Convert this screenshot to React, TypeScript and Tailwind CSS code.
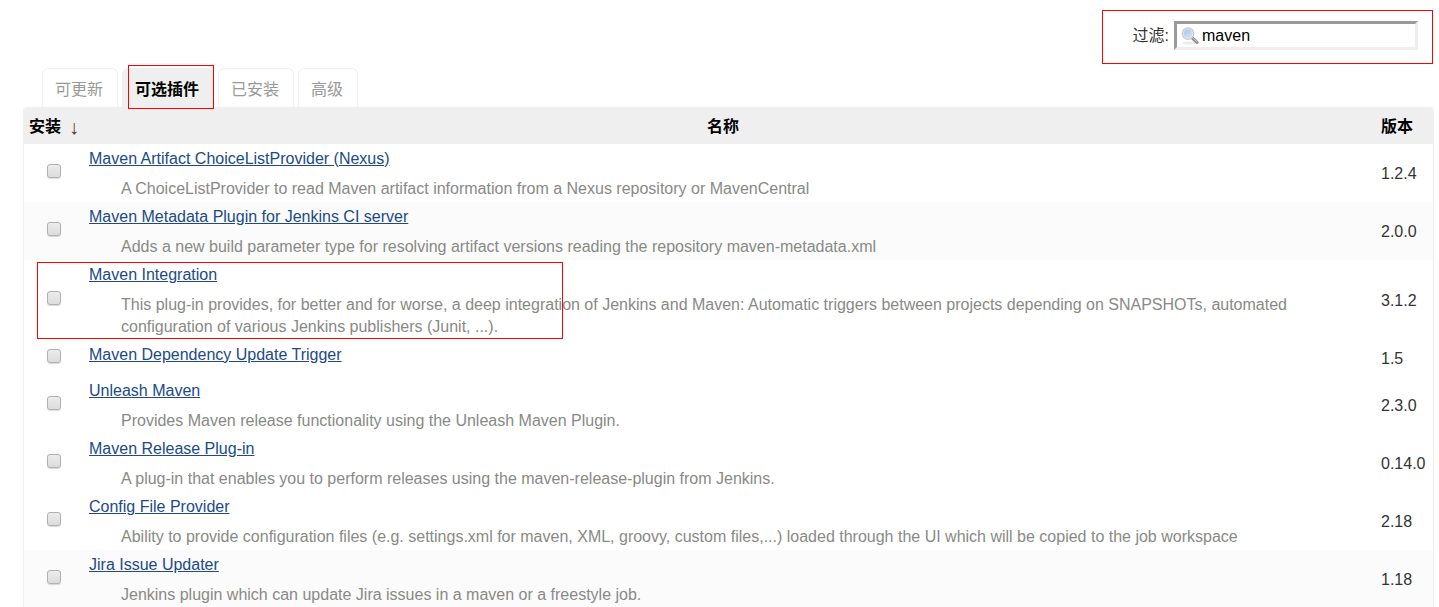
type Plugin = {
  name: string;
  version: string;
  description?: string;
  shaded?: boolean;
  highlighted?: boolean;
};

const plugins: Plugin[] = [
  {
    name: "Maven Artifact ChoiceListProvider (Nexus)",
    version: "1.2.4",
    description: "A ChoiceListProvider to read Maven artifact information from a Nexus repository or MavenCentral",
  },
  {
    name: "Maven Metadata Plugin for Jenkins CI server",
    version: "2.0.0",
    description: "Adds a new build parameter type for resolving artifact versions reading the repository maven-metadata.xml",
    shaded: true,
  },
  {
    name: "Maven Integration",
    version: "3.1.2",
    description:
      "This plug-in provides, for better and for worse, a deep integration of Jenkins and Maven: Automatic triggers between projects depending on SNAPSHOTs, automated configuration of various Jenkins publishers (Junit, ...).",
    highlighted: true,
  },
  { name: "Maven Dependency Update Trigger", version: "1.5" },
  {
    name: "Unleash Maven",
    version: "2.3.0",
    description: "Provides Maven release functionality using the Unleash Maven Plugin.",
  },
  {
    name: "Maven Release Plug-in",
    version: "0.14.0",
    description: "A plug-in that enables you to perform releases using the maven-release-plugin from Jenkins.",
  },
  {
    name: "Config File Provider",
    version: "2.18",
    description:
      "Ability to provide configuration files (e.g. settings.xml for maven, XML, groovy, custom files,...) loaded through the UI which will be copied to the job workspace",
  },
  {
    name: "Jira Issue Updater",
    version: "1.18",
    description: "Jenkins plugin which can update Jira issues in a maven or a freestyle job.",
    shaded: true,
  },
];

const tabs = [
  { label: "可更新" },
  { label: "可选插件", active: true },
  { label: "已安装" },
  { label: "高级" },
];

function SearchIcon() {
  return (
    <svg viewBox="0 0 18 18" className="h-[18px] w-[18px] shrink-0" aria-hidden="true">
      <defs>
        <linearGradient id="lens" x1="0" y1="0" x2="0.6" y2="1">
          <stop offset="0" stopColor="#a3c0e2" />
          <stop offset="1" stopColor="#d3e3f5" />
        </linearGradient>
      </defs>
      <ellipse cx="8" cy="16" rx="7" ry="1.6" fill="#ececec" />
      <path d="M11.4 11 16 15.4" stroke="#929292" strokeWidth="3.2" strokeLinecap="round" />
      <path d="M12 11.2 15.8 14.6" stroke="#c4c4c4" strokeWidth="1" strokeLinecap="round" />
      <circle cx="7" cy="6.6" r="5.7" fill="url(#lens)" stroke="#c6cbd2" strokeWidth="1.3" />
      <circle cx="7" cy="6.6" r="4.7" fill="none" stroke="#e9f1fa" strokeWidth="0.7" />
    </svg>
  );
}

function FilterBox() {
  return (
    <div className="flex justify-end pt-[10px] pr-[6px]">
      <div className="flex h-[54px] items-start border border-[#f00] pt-[10px] pr-[14px] pl-[30px]">
        <label htmlFor="filter-box" className="mr-[5px] leading-[29px]">
          过滤:
        </label>
        <div className="flex h-[29px] w-[244px] items-center gap-[3px] border-[3px] border-t-[#9a9a9a] border-r-[#eee] border-b-[#eee] border-l-[#9a9a9a] bg-white pl-1">
          <SearchIcon />
          <input
            id="filter-box"
            type="text"
            defaultValue="maven"
            className="h-full w-full min-w-0 bg-transparent text-black outline-none"
          />
        </div>
      </div>
    </div>
  );
}

function TabBar() {
  return (
    <nav className="mt-1 flex gap-1 pl-[42px]">
      {tabs.map((tab) => (
        <a
          key={tab.label}
          href="#"
          className={
            tab.active
              ? "relative h-[39px] rounded-t-md border border-b-0 border-[#efefef] bg-[#efefef] pr-[14px] pl-3 leading-[42px] font-bold text-black"
              : "h-[39px] rounded-t-md border border-b-0 border-[#efefef] pr-[14px] pl-3 leading-[42px] text-[#999]"
          }
        >
          {tab.label}
          {tab.active && <span className="absolute -top-1 -right-px -bottom-[2px] left-[5px] border border-[#f00]" />}
        </a>
      ))}
    </nav>
  );
}

function PluginRow({ plugin, index }: { plugin: Plugin; index: number }) {
  const id = `plugin-${index}`;
  return (
    <tr className={plugin.shaded ? "bg-[#fbfbfb]" : "bg-white"}>
      <td className="relative p-0 pr-[2px] pb-1 align-middle">
        <input
          id={id}
          type="checkbox"
          aria-label={plugin.name}
          className="mx-auto block h-[14px] w-[14px] appearance-none rounded-[3px] border border-[#b0b0b0] bg-linear-to-b from-[#ececec] to-[#dcdcdc] shadow-[0_1px_1px_rgba(0,0,0,0.15)] checked:bg-[#8fb0dc]"
        />
        {plugin.highlighted && (
          <span className="pointer-events-none absolute top-[2px] bottom-px left-[13px] w-[526px] border border-[#f00]" />
        )}
      </td>
      <td className="px-[3px] pt-1 pb-[2px] align-top">
        <div>
          <a href="#" className="text-[#204a87] underline">
            {plugin.name}
          </a>
        </div>
        <div className="mt-2 pl-8 text-[#888a85]">{plugin.description}</div>
      </td>
      <td className="pt-[2px] pl-[21px] align-middle">{plugin.version}</td>
    </tr>
  );
}

export default function App() {
  return (
    <main className="bg-white font-['Liberation_Sans','Noto_Sans_CJK_SC',sans-serif] text-[16px] leading-[22px] text-[#333]">
      <FilterBox />
      <TabBar />
      <div className="mr-[5px] ml-[23px] overflow-hidden rounded-t border-x border-[#efefef]">
        <table className="w-full table-fixed border-collapse">
          <thead>
            <tr className="h-[37px] bg-[#efefef] text-black">
              <th className="w-[62px] p-0 pt-[2px] pl-[5px] text-left">
                <button type="button" className="flex items-center gap-2 font-bold whitespace-nowrap">
                  安装
                  <span className="text-[20px] font-normal text-[#5a3a20]">↓</span>
                </button>
              </th>
              <th className="p-0 pt-[2px] text-center">名称</th>
              <th className="w-[73px] p-0 pt-[2px] pl-[21px] text-left">版本</th>
            </tr>
          </thead>
          <tbody>
            {plugins.map((plugin, index) => (
              <PluginRow key={plugin.name} plugin={plugin} index={index} />
            ))}
          </tbody>
        </table>
      </div>
    </main>
  );
}
